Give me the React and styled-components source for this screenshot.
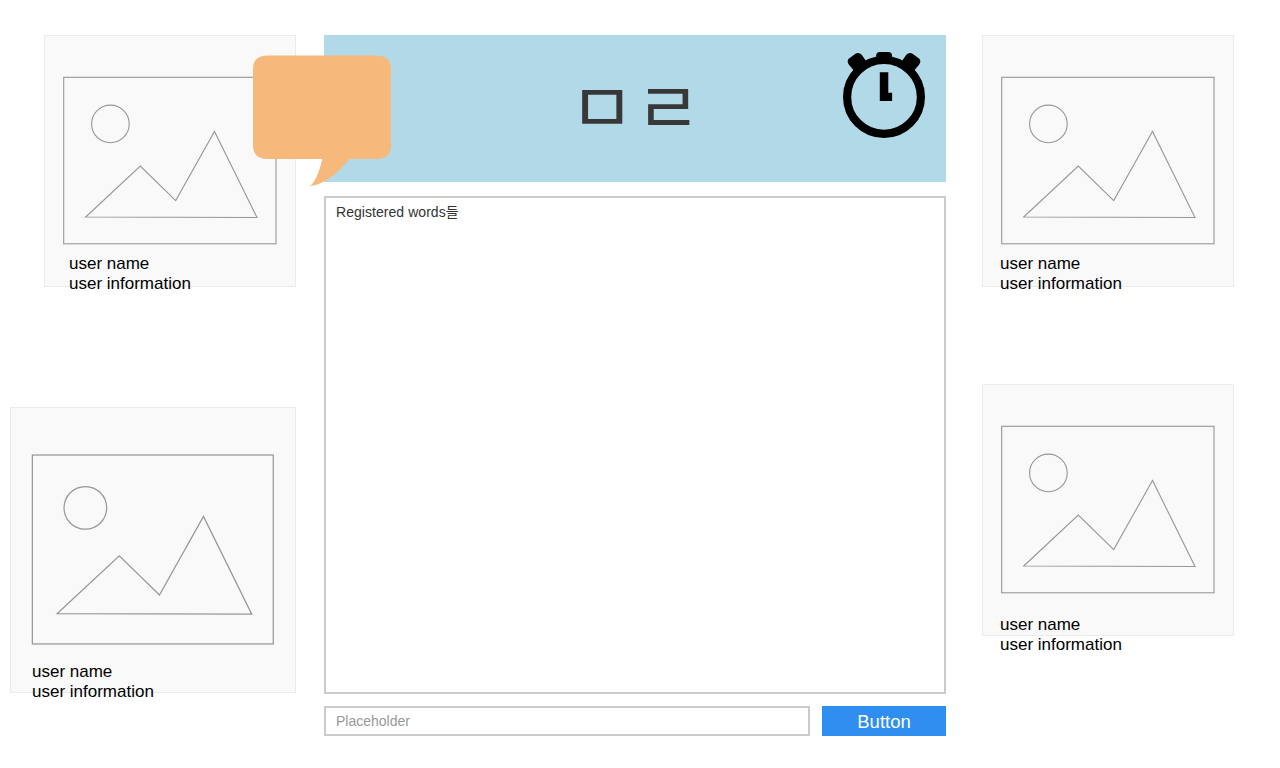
import React from 'react';
import styled, { createGlobalStyle } from 'styled-components';

const GlobalStyle = createGlobalStyle`
  * { box-sizing: border-box; }
  body {
    margin: 0;
    background: #fff;
    font-family: "Liberation Sans", "Noto Sans CJK KR", sans-serif;
  }
`;

const Page = styled.main`
  position: relative;
  display: flex;
  width: 1280px;
  height: 768px;
  padding: 35px 46px 32px 10px;
  overflow: hidden;
`;

const PlayerColumn = styled.section`
  display: flex;
  flex-direction: column;
  align-items: flex-end;
  gap: ${(p) => p.$gap}px;
  width: ${(p) => p.$width}px;
`;

const Card = styled.article`
  flex: none;
  width: ${(p) => p.$size}px;
  height: ${(p) => p.$size}px;
  border: 1px solid #ebebeb;
  background: #f9f9f9;
`;

const Picture = styled.svg`
  display: block;
  width: ${(p) => p.$w}px;
  height: ${(p) => p.$h}px;
  margin: ${(p) => p.$top}px 0 0 ${(p) => p.$left}px;
  overflow: visible;
  fill: none;
  stroke: #979797;
  stroke-width: 1.1;
`;

const Caption = styled.div`
  margin: ${(p) => p.$top}px 0 0 ${(p) => p.$left}px;
  color: #000;
  font-size: 17px;
  line-height: 20px;
  white-space: nowrap;
`;

const Board = styled.section`
  display: flex;
  flex-direction: column;
  width: 622px;
  margin: 0 36px 0 28px;
`;

const Banner = styled.header`
  display: grid;
  grid-template-columns: 1fr auto 1fr;
  height: 147px;
  background: #b2d9e7;
`;

const Letters = styled.h1`
  grid-column: 2;
  margin: 0;
  color: #383838;
  font-family: "Noto Sans CJK KR", sans-serif;
  font-size: 71px;
  font-weight: 400;
  line-height: 134px;
  word-spacing: -15px;
  white-space: pre;
`;

const Stopwatch = styled.svg`
  justify-self: end;
  width: 100px;
  height: 100px;
  margin: 10px 11px 0 0;
`;

const WordList = styled.div`
  height: 498px;
  margin-top: 14px;
  padding: 4px 10px;
  border: 2px solid #cbcbcb;
  color: #333;
  font-size: 14px;
  letter-spacing: 0.05px;
  line-height: 20px;
`;

const EntryRow = styled.form`
  display: flex;
  gap: 12px;
  height: 30px;
  margin-top: 12px;
`;

const WordInput = styled.input`
  flex: 1;
  min-width: 0;
  padding: 0 10px;
  border: 2px solid #cbcbcb;
  background: #fff;
  font: 14px "Liberation Sans", sans-serif;
  &::placeholder { color: #999; opacity: 1; }
`;

const SubmitButton = styled.button`
  width: 124px;
  padding: 1px 0 0;
  border: 0;
  background: #2f8ef0;
  color: #fff;
  font: 18.5px "Liberation Sans", sans-serif;
`;

const SpeechBubble = styled.svg`
  position: absolute;
  left: 250px;
  top: 52px;
  width: 144px;
  height: 138px;
  fill: #f7b97b;
`;

function PlayerCard({ size = 252, captionLeft, captionTop }) {
  const k = size / 252;
  const left = Math.floor(19 * k);
  const top = Math.floor(41 * k);
  return (
    <Card $size={size}>
      <Picture
        viewBox={`${left / k} ${top / k} 214 169`}
        $w={214 * k}
        $h={169 * k}
        $top={top - 1}
        $left={left - 1}
      >
        <rect x="19.7" y="42.3" width="212.3" height="166.5" />
        <circle cx="66.4" cy="88.9" r="18.8" />
        <path d="M41.7 182 L96.3 131.1 L131.7 165.6 L170.5 96.4 L213 182.5 Z" />
      </Picture>
      <Caption $top={captionTop} $left={captionLeft - 1}>
        <div>user name</div>
        <div>user information</div>
      </Caption>
    </Card>
  );
}

export default function App() {
  return (
    <>
      <GlobalStyle />
      <Page>
        <PlayerColumn $width={286} $gap={120}>
          <PlayerCard captionLeft={25} captionTop={9} />
          <PlayerCard size={286} captionLeft={22} captionTop={17.5} />
        </PlayerColumn>
        <Board>
          <Banner>
            <Letters>ㅁ ㄹ</Letters>
            <Stopwatch viewBox="0 0 100 100">
              <circle cx="49" cy="51.9" r="36.9" fill="none" stroke="#000" strokeWidth="8.2" />
              <path d="M41.2 14 V10.5 Q41.2 6.9 44.7 6.9 H53.3 Q57 6.9 57 10.5 V14 Z" />
              <path d="M20 27 L13.8 19.4 Q11.2 15.8 14.4 13.3 L20.4 8.8 Q23.8 6.6 26.7 9.8 L32 17.5 Z" />
              <path d="M78 27 L84.2 19.4 Q86.8 15.8 83.6 13.3 L77.6 8.8 Q74.2 6.6 71.3 9.8 L66 17.5 Z" />
              <path d="M44.8 27.2 H53.3 V47.8 H57.1 V56 H44.8 Z" />
            </Stopwatch>
          </Banner>
          <WordList>Registered words들</WordList>
          <EntryRow>
            <WordInput placeholder="Placeholder" />
            <SubmitButton type="button">Button</SubmitButton>
          </EntryRow>
        </Board>
        <PlayerColumn $width={252} $gap={97}>
          <PlayerCard captionLeft={18} captionTop={9} />
          <PlayerCard captionLeft={18} captionTop={21} />
        </PlayerColumn>
        <SpeechBubble viewBox="250 52 144 138">
          <path d="M267 55.5 H377 Q391 55.5 391 69.5 V145 Q391 159 377 159 H349.5 Q329 184 309.5 186.3 Q317 181.5 322.3 159 H267 Q253 159 253 145 V69.5 Q253 55.5 267 55.5 Z" />
        </SpeechBubble>
      </Page>
    </>
  );
}
